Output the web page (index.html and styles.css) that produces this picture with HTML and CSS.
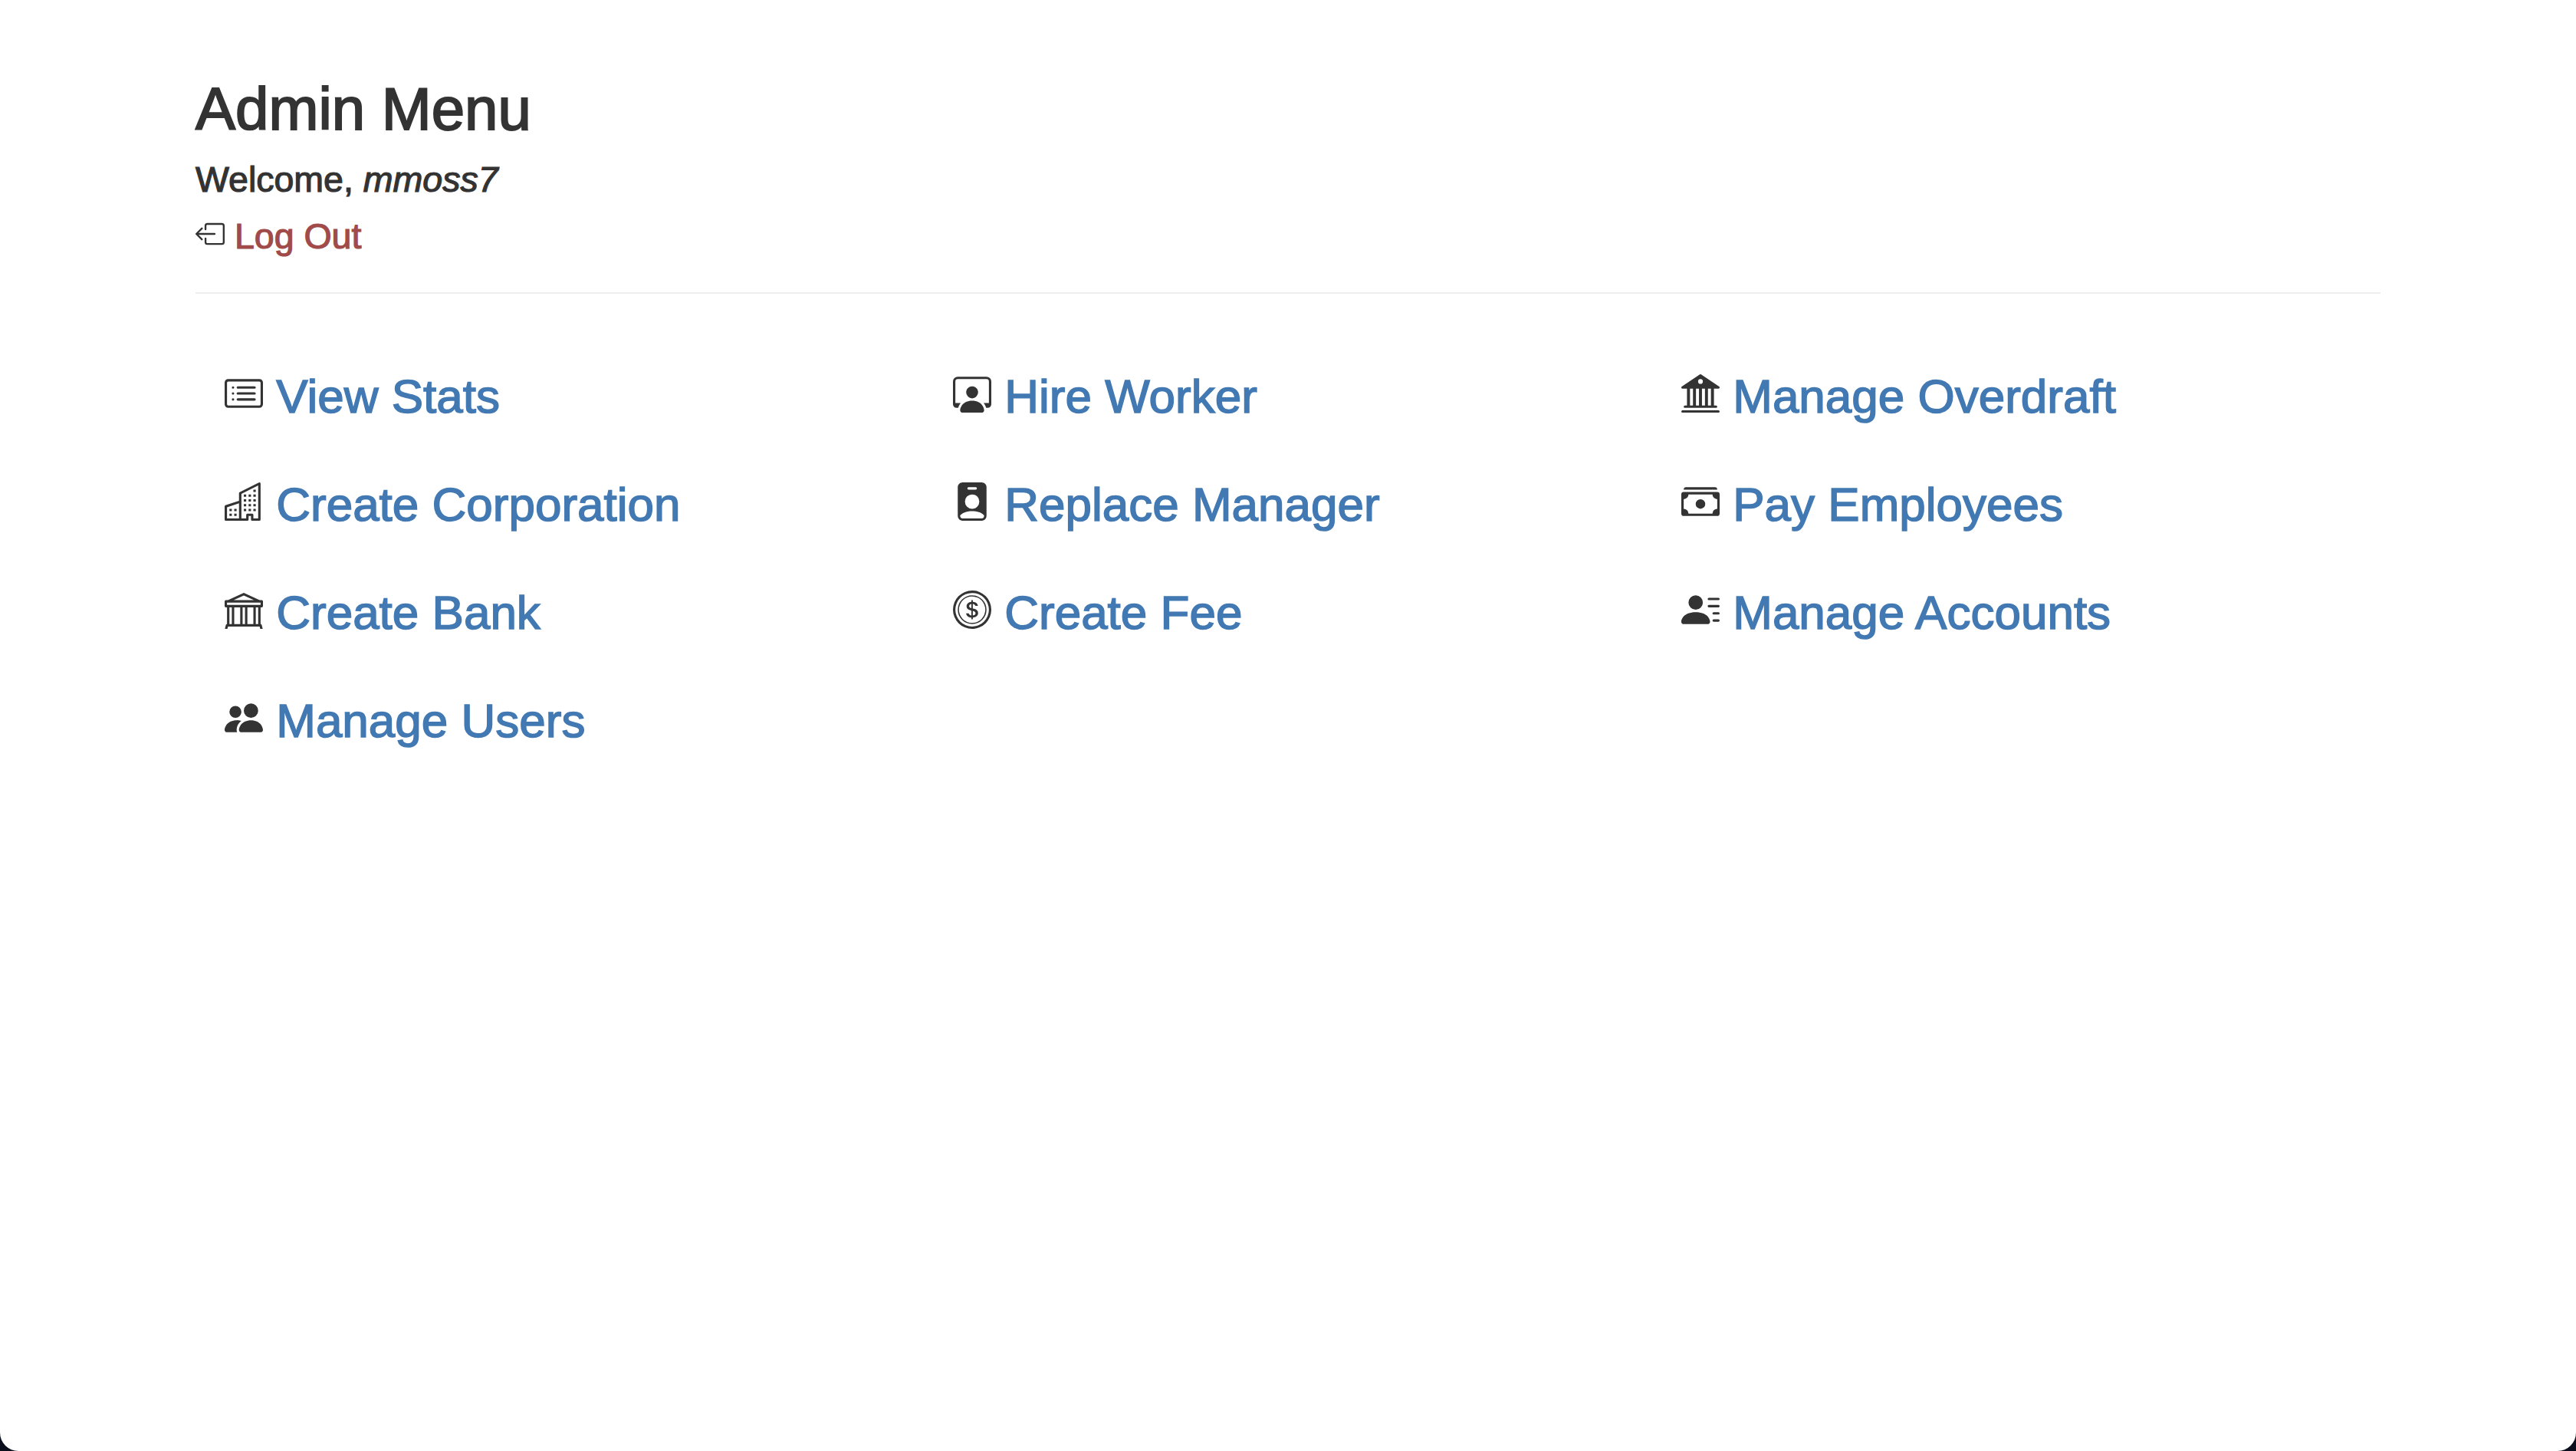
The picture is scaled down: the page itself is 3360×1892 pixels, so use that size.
FILE: index.html
```html
<!DOCTYPE html>
<html lang="en">
<head>
<meta charset="utf-8">
<title>Admin Menu</title>
<link rel="stylesheet" href="styles.css">
</head>
<body>
<div class="page">
  <header class="head">
    <h1 class="title">Admin Menu</h1>
    <div class="welcome">Welcome, <em>mmoss7</em></div>
    <div class="logout">
      <svg class="ico-sm" viewBox="0 0 16 16"><path fill-rule="evenodd" d="M6 12.5a.5.5 0 0 0 .5.5h8a.5.5 0 0 0 .5-.5v-9a.5.5 0 0 0-.5-.5h-8a.5.5 0 0 0-.5.5v2a.5.5 0 0 1-1 0v-2A1.5 1.5 0 0 1 6.5 2h8A1.5 1.5 0 0 1 16 3.5v9a1.5 1.5 0 0 1-1.5 1.5h-8A1.5 1.5 0 0 1 5 12.5v-2a.5.5 0 0 1 1 0v2z"/><path fill-rule="evenodd" d="M.146 8.354a.5.5 0 0 1 0-.708l3-3a.5.5 0 1 1 .708.708L1.707 7.5H10.5a.5.5 0 0 1 0 1H1.707l2.147 2.146a.5.5 0 0 1-.708.708l-3-3z"/></svg>
      <a class="logout-link" href="#">Log Out</a>
    </div>
  </header>
  <hr class="rule">
  <nav class="menu">
    <div class="item"><svg class="ico" viewBox="0 0 16 16"><path d="M14.5 3a.5.5 0 0 1 .5.5v9a.5.5 0 0 1-.5.5h-13a.5.5 0 0 1-.5-.5v-9a.5.5 0 0 1 .5-.5h13zm-13-1A1.5 1.5 0 0 0 0 3.5v9A1.5 1.5 0 0 0 1.5 14h13a1.5 1.5 0 0 0 1.5-1.5v-9A1.5 1.5 0 0 0 14.5 2h-13z"/><path d="M5 8a.5.5 0 0 1 .5-.5h7a.5.5 0 0 1 0 1h-7A.5.5 0 0 1 5 8zm0-2.5a.5.5 0 0 1 .5-.5h7a.5.5 0 0 1 0 1h-7a.5.5 0 0 1-.5-.5zm0 5a.5.5 0 0 1 .5-.5h7a.5.5 0 0 1 0 1h-7a.5.5 0 0 1-.5-.5zm-1-5a.5.5 0 1 1-1 0 .5.5 0 0 1 1 0zM4 8a.5.5 0 1 1-1 0 .5.5 0 0 1 1 0zm0 2.5a.5.5 0 1 1-1 0 .5.5 0 0 1 1 0z"/></svg> <a href="#">View Stats</a></div>
    <div class="item"><svg class="ico" viewBox="0 0 16 16"><path d="M4 16s-1 0-1-1 1-4 5-4 5 3 5 4-1 1-1 1H4Zm4-5.95a2.5 2.5 0 1 0 0-5 2.5 2.5 0 0 0 0 5Z"/><path d="M2 1a2 2 0 0 0-2 2v9.5A1.5 1.5 0 0 0 1.5 14h.653a5.373 5.373 0 0 1 1.066-2H1V3a1 1 0 0 1 1-1h12a1 1 0 0 1 1 1v9h-2.219c.554.654.89 1.373 1.066 2h.653a1.5 1.5 0 0 0 1.5-1.5V3a2 2 0 0 0-2-2H2Z"/></svg> <a href="#">Hire Worker</a></div>
    <div class="item"><svg class="ico" viewBox="0 0 16 16"><path d="M8.277.084a.5.5 0 0 0-.554 0l-7.5 5A.5.5 0 0 0 .5 6h1.875v7H1.5a.5.5 0 0 0 0 1h13a.5.5 0 1 0 0-1h-.875V6H15.5a.5.5 0 0 0 .277-.916l-7.5-5zM12.375 6v7h-1.25V6h1.25zm-2.5 0v7h-1.25V6h1.25zm-2.5 0v7h-1.25V6h1.25zm-2.5 0v7h-1.25V6h1.25zM8 4a1 1 0 1 1 0-2 1 1 0 0 1 0 2zM.5 15a.5.5 0 0 0 0 1h15a.5.5 0 1 0 0-1H.5z"/></svg> <a href="#">Manage Overdraft</a></div>
    <div class="item"><svg class="ico" viewBox="0 0 16 16"><path d="M14.763.075A.5.5 0 0 1 15 .5v15a.5.5 0 0 1-.5.5h-3a.5.5 0 0 1-.5-.5V14h-1v1.5a.5.5 0 0 1-.5.5h-9a.5.5 0 0 1-.5-.5V10a.5.5 0 0 1 .342-.474L6 7.64V4.5a.5.5 0 0 1 .276-.447l8-4a.5.5 0 0 1 .487.022ZM6 8.694 1 10.36V15h5V8.694ZM7 15h2v-1.5a.5.5 0 0 1 .5-.5h2a.5.5 0 0 1 .5.5V15h2V1.309l-7 3.5V15Z"/><path d="M2 11h1v1H2v-1Zm2 0h1v1H4v-1Zm-2 2h1v1H2v-1Zm2 0h1v1H4v-1Zm4-4h1v1H8V9Zm2 0h1v1h-1V9Zm-2 2h1v1H8v-1Zm2 0h1v1h-1v-1Zm2-2h1v1h-1V9Zm0 2h1v1h-1v-1ZM8 7h1v1H8V7Zm2 0h1v1h-1V7Zm2 0h1v1h-1V7ZM8 5h1v1H8V5Zm2 0h1v1h-1V5Zm2 0h1v1h-1V5Zm0-2h1v1h-1V3Z"/></svg> <a href="#">Create Corporation</a></div>
    <div class="item"><svg class="ico" viewBox="0 0 16 16"><path d="M2 2a2 2 0 0 1 2-2h8a2 2 0 0 1 2 2v12a2 2 0 0 1-2 2H4a2 2 0 0 1-2-2V2zm4.5 0a.5.5 0 0 0 0 1h3a.5.5 0 0 0 0-1h-3zM8 11a3 3 0 1 0 0-6 3 3 0 0 0 0 6zm5 2.755C12.146 12.825 10.623 12 8 12s-4.146.826-5 1.755V14a1 1 0 0 0 1 1h8a1 1 0 0 0 1-1v-.245z"/></svg> <a href="#">Replace Manager</a></div>
    <div class="item"><svg class="ico" viewBox="0 0 16 16"><path d="M1 3a1 1 0 0 1 1-1h12a1 1 0 0 1 1 1H1zm7 8a2 2 0 1 0 0-4 2 2 0 0 0 0 4z"/><path d="M0 5a1 1 0 0 1 1-1h14a1 1 0 0 1 1 1v8a1 1 0 0 1-1 1H1a1 1 0 0 1-1-1V5zm3 0a2 2 0 0 1-2 2v4a2 2 0 0 1 2 2h10a2 2 0 0 1 2-2V7a2 2 0 0 1-2-2H3z"/></svg> <a href="#">Pay Employees</a></div>
    <div class="item"><svg class="ico" viewBox="0 0 16 16"><path d="M8 .95 14.61 4h.89a.5.5 0 0 1 .5.5v2a.5.5 0 0 1-.5.5H15v7a.5.5 0 0 1 .485.379l.5 2A.5.5 0 0 1 15.5 17H.5a.5.5 0 0 1-.485-.621l.5-2A.5.5 0 0 1 1 14V7H.5a.5.5 0 0 1-.5-.5v-2A.5.5 0 0 1 .5 4h.89L8 .95zM3.776 4h8.447L8 2.05 3.776 4zM2 7v7h1V7H2zm2 0v7h2.5V7H4zm3.5 0v7h1V7h-1zm2 0v7H12V7H9.5zM13 7v7h1V7h-1zm2-1V5H1v1h14zm-.39 9H1.39l-.25 1h13.72l-.25-1z"/></svg> <a href="#">Create Bank</a></div>
    <div class="item"><svg class="ico" viewBox="0 0 16 16"><path d="M5.5 9.511c.076.954.83 1.697 2.182 1.785V12h.6v-.709c1.4-.098 2.218-.846 2.218-1.932 0-.987-.626-1.496-1.745-1.76l-.473-.112V5.57c.6.068.982.396 1.074.85h1.052c-.076-.919-.864-1.638-2.126-1.716V4h-.6v.719c-1.195.117-2.01.836-2.01 1.853 0 .9.606 1.472 1.613 1.707l.397.098v2.034c-.615-.093-1.022-.43-1.114-.9H5.5zm2.177-2.166c-.59-.137-.91-.416-.91-.836 0-.47.345-.822.915-.925v1.76h-.005zm.692 1.193c.717.166 1.048.435 1.048.91 0 .542-.412.914-1.135.982V8.518l.087.02z"/><path d="M8 15A7 7 0 1 1 8 1a7 7 0 0 1 0 14zm0 1A8 8 0 1 0 8 0a8 8 0 0 0 0 16z"/><path d="M8 13.5a5.5 5.5 0 1 1 0-11 5.5 5.5 0 0 1 0 11zm0 .5A6 6 0 1 0 8 2a6 6 0 0 0 0 12z"/></svg> <a href="#">Create Fee</a></div>
    <div class="item"><svg class="ico" viewBox="0 0 16 16"><path d="M6 8a3 3 0 1 0 0-6 3 3 0 0 0 0 6zm-5 6s-1 0-1-1 1-4 6-4 6 3 6 4-1 1-1 1H1zM11 3.5a.5.5 0 0 1 .5-.5h4a.5.5 0 0 1 0 1h-4a.5.5 0 0 1-.5-.5zm.5 2.5a.5.5 0 0 0 0 1h4a.5.5 0 0 0 0-1h-4zm2 3a.5.5 0 0 0 0 1h2a.5.5 0 0 0 0-1h-2zm0 3a.5.5 0 0 0 0 1h2a.5.5 0 0 0 0-1h-2z"/></svg> <a href="#">Manage Accounts</a></div>
    <div class="item"><svg class="ico" viewBox="0 0 16 16"><path d="M7 14s-1 0-1-1 1-4 5-4 5 3 5 4-1 1-1 1H7Zm4-6a3 3 0 1 0 0-6 3 3 0 0 0 0 6Zm-5.784 6A2.238 2.238 0 0 1 5 13c0-1.355.68-2.75 1.936-3.72A6.325 6.325 0 0 0 5 9c-4 0-5 3-5 4s1 1 1 1h4.216ZM4.5 8a2.5 2.5 0 1 0 0-5 2.5 2.5 0 0 0 0 5Z"/></svg> <a href="#">Manage Users</a></div>
  </nav>
</div>
</body>
</html>
```
FILE: styles.css
```css
html, body { margin: 0; height: 100%; background: #0b0e1c; }
body { font-family: "Liberation Sans", Arial, sans-serif; color: #333; overflow: hidden; }
.page { box-sizing: border-box; height: 100vh; background: #fff; border-radius: 0 0 24px 24px; padding: 94px 255px 0; }
.title { margin: 0; font-size: 78px; line-height: 96px; font-weight: 400; -webkit-text-stroke: 2px #333; }
.welcome { font-size: 46.5px; line-height: 70px; margin-top: 9px; -webkit-text-stroke: 1.2px #333; }
.welcome em { font-style: italic; }
.logout { font-size: 46.5px; line-height: 74px; margin-top: 2px; }
.logout-link { color: #a04b4a; text-decoration: none; -webkit-text-stroke: 1.2px #a04b4a; }
.ico-sm { width: 38px; height: 38px; fill: #333; }
.rule { margin: 36px 0 0; border: 0; border-top: 2px solid #eee; }
.menu { display: grid; grid-template-columns: repeat(3, 950px); grid-auto-rows: 141px; padding: 63px 0 0 38px; }
.item { font-size: 62px; line-height: 141px; height: 141px; white-space: nowrap; }
.item a { color: #4279b3; text-decoration: none; -webkit-text-stroke: 1.5px #4279b3; }
.ico { width: 50px; height: 50px; fill: #333; }
```
